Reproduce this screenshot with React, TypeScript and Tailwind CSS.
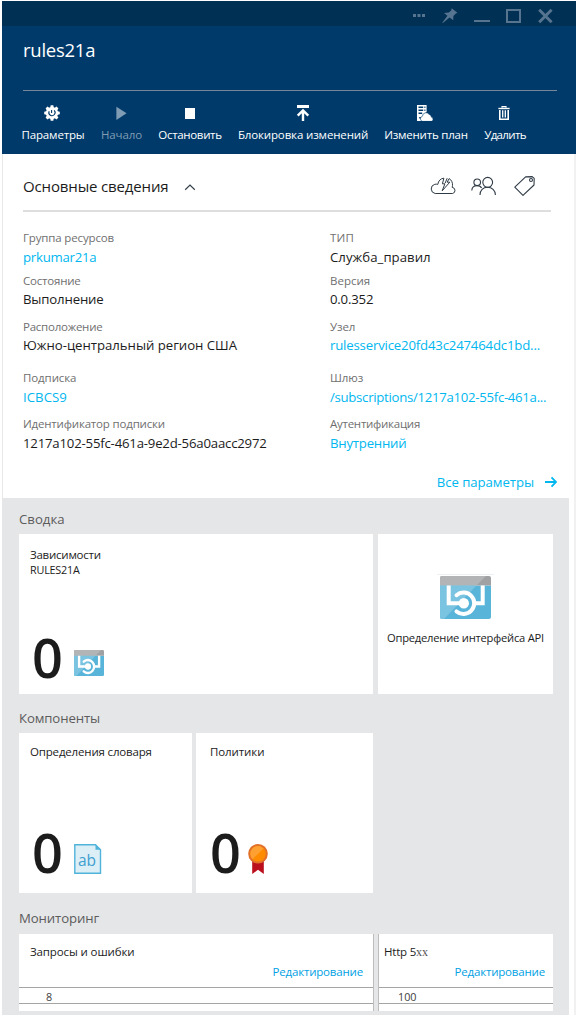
import type { ReactNode } from "react";

const label = "text-[11.5px] leading-[16px] text-[#6f6f6f]";
const link = "text-[#00b7ef]";
const dark = "text-[#1c1c1c]";

function Dots() {
  return (
    <svg width="12" height="16" viewBox="0 0 12 16" fill="#56748f">
      <rect x="0" y="6" width="3" height="3" />
      <rect x="4.5" y="6" width="3" height="3" />
      <rect x="9" y="6" width="3" height="3" />
    </svg>
  );
}

function Pin() {
  return (
    <svg width="16" height="16" viewBox="0 0 16 16" fill="#56748f">
      <path d="M9.7 0.2 L15.4 4.8 L13.6 5.8 L11.4 8 L11.2 12.2 L7.6 9.5 L0.8 15 L0.4 14.5 L5.4 7.8 L2 5 L6.8 4.6 L9.2 2.6 Z" />
    </svg>
  );
}

function Minimize() {
  return (
    <svg width="16" height="16" viewBox="0 0 16 16">
      <rect x="0" y="12" width="16" height="2" fill="#56748f" />
    </svg>
  );
}

function Maximize() {
  return (
    <svg width="15" height="16" viewBox="0 0 15 16">
      <rect x="1" y="2" width="13" height="12" fill="none" stroke="#56748f" strokeWidth="2" />
    </svg>
  );
}

function Close() {
  return (
    <svg width="15" height="16" viewBox="0 0 15 16">
      <path d="M1.2 1.8 L13.6 14.2 M13.6 1.8 L1.2 14.2" stroke="#56748f" strokeWidth="3" />
    </svg>
  );
}

function Gear() {
  return (
    <svg className="mr-0.5" width="16" height="16" viewBox="0 0 16 16">
      <g fill="#fff">
        <circle cx="8" cy="8" r="6.1" />
        <path d="M6.7 0.2h2.6l.6 3h-3.8zM6.7 15.8h2.6l.6-3h-3.8zM.2 6.7v2.6l3 .6V6.1zM15.8 6.7v2.6l-3 .6V6.1z" />
        <path d="M1.6 3.4 3.4 1.6 6 3.2 3.2 6zM14.4 3.4 12.6 1.6 10 3.2 12.8 6zM1.6 12.6l1.8 1.8L6 12.8 3.2 10zM14.4 12.6l-1.8 1.8-2.6-1.6 2.8-2.8z" />
      </g>
      <path d="M5.2 6.2a3.1 3.1 0 1 0 5 -.8M7.600 5v3" fill="none" stroke="#003a6a" strokeWidth="1.1" />
    </svg>
  );
}

function Play() {
  return (
    <svg className="mr-px" width="16" height="16" viewBox="0 0 16 16">
      <path d="M3.4 1.8 L13.6 8.3 L3.4 15 Z" fill="#7f9cb4" />
    </svg>
  );
}

function Stop() {
  return (
    <svg width="16" height="16" viewBox="0 0 16 16">
      <rect x="3" y="3" width="10" height="11" fill="#fff" />
    </svg>
  );
}

function Lock() {
  return (
    <svg width="16" height="16" viewBox="0 0 16 16">
      <rect x="2" y="0" width="12" height="3" fill="#fff" />
      <path d="M8 16V6.2M2.7 10.6 8 5.4l5.3 5.2" fill="none" stroke="#fff" strokeWidth="2.4" />
    </svg>
  );
}

function Plan() {
  return (
    <svg className="mr-0.5" width="16" height="16" viewBox="0 0 16 16">
      <path d="M0 0h9.600v7L6 10v6H0z" fill="#fff" />
      <path d="M1.500 2.200h4.700M7.400 2.200h1M1.500 5.200h4.700M7.400 5.200h1M1.500 8.300h3.700M2.200 12.800h1.800" stroke="#003a6a" strokeWidth="1.4" />
      <path
        d="M5.6 16.4a2.6 2.6 0 0 1-.2-5.1 3.7 3.7 0 0 1 6.8-1.9 2.6 2.6 0 0 1 2.1 2.700 2.2 2.2 0 0 1 0 4.3z"
        fill="#fff"
        stroke="#003a6a"
        strokeWidth=".6"
      />
    </svg>
  );
}

function Trash() {
  return (
    <svg className="mr-0.5" width="16" height="16" viewBox="0 0 16 16" fill="none" stroke="#fff">
      <path d="M2.4 3.5h11.2" strokeWidth="1.4" />
      <path d="M6 2.8V1.6h4v1.2" strokeWidth="1.1" />
      <path d="M3.8 5v9.3h8.4V5" strokeWidth="1.6" />
      <path d="M6.7 5.2v7.4M9.3 5.2v7.4" strokeWidth="1.3" />
    </svg>
  );
}

function CloudBolt() {
  return (
    <svg width="26" height="18" viewBox="0 0 26 18" fill="none" stroke="#2f3b46" strokeWidth="1" strokeLinejoin="round">
      <path d="M12 16.500H5.200a4.700 4.700 0 0 1-.4-9.200 5.500 5.500 0 0 1 3 .1C8.200 4 10.600 1.400 13.900 1.200L12.400 6.800h2.500l-2.700 7 7.600-8.600h-2.600l1.900-3.600c2.400 1.300 3.600 3.800 3.400 6.900l-.3 1.900a3.100 3.100 0 0 1 .4 6.100H12" />
      <path d="M17.200 1.200 15.200 6" />
    </svg>
  );
}

function People() {
  return (
    <svg width="26" height="20" viewBox="0 0 26 20" fill="none" stroke="#2f3b46" strokeWidth="1.1">
      <circle cx="16.7" cy="6.3" r="4.9" />
      <path d="M9 19c0-4.800 3.100-7.700 7.500-7.700s7.900 2.900 7.900 7.700" />
      <circle cx="6.200" cy="6.300" r="3.300" />
      <path d="M.8 14.600c0-3.300 2-5 5.400-5 2 0 3.600.8 4.400 2.400" />
    </svg>
  );
}

function Tag() {
  return (
    <svg width="22" height="20" viewBox="0 0 22 20" fill="none" stroke="#2f3b46" strokeWidth="1.1" strokeLinejoin="round">
      <path d="M.8 11.200 11.600.900 18.200.600 20.200 2.400 20 9 9 19.400Z" />
      <circle cx="17" cy="4" r="1.500" />
    </svg>
  );
}

function ApiIcon({ className }: { className: string }) {
  return (
    <svg className={className} viewBox="0 0 51 43" preserveAspectRatio="none">
      <path d="M0 9.500h51V41a2 2 0 0 1-2 2H2a2 2 0 0 1-2-2z" fill="#59b4d9" />
      <path d="M0 9.500V2a2 2 0 0 1 2-2h47a2 2 0 0 1 2 2v7.500z" fill="#a0a1a2" />
      <path d="M0 9.500V2a2 2 0 0 1 2-2h44L36.500 9.500z" fill="#b3b4b5" />
      <path d="M0 9.500h36.500L4 43H2a2 2 0 0 1-2-2z" fill="#7ac3e1" />
      <g fill="none" stroke="#fff" strokeWidth="4">
        <path d="M8.700 9.500V27.300H21" />
        <path d="M42.700 9.500V27.300H35" />
        <path d="M16.500 19.200a10.700 10.700 0 1 1 0 16.200" strokeLinecap="round" />
      </g>
      <circle cx="23.800" cy="27.300" r="5.200" fill="#fff" />
    </svg>
  );
}

function DictionaryIcon() {
  return (
    <svg width="28" height="30" viewBox="0 0 28 30">
      <path d="M.8.800H21.500L26.500 5.700V29.300H.8Z" fill="#dceef6" stroke="#4fb3da" strokeWidth="1.400" />
      <path d="M21.500.500V5.700H27z" fill="#4fb3da" />
      <text x="4" y="22" fill="#3f9fd0" className="font-['Open_Sans'] text-[15.5px] tracking-[-0.1px]">
        ab
      </text>
    </svg>
  );
}

function MedalIcon() {
  return (
    <svg width="20" height="30" viewBox="0 0 20 30">
      <path d="M4.200 17h11.600V30L10 25.800 4.200 30z" fill="#bb0f1d" />
      <circle cx="10" cy="9.800" r="9.800" fill="#e0702a" />
      <circle cx="10" cy="9.800" r="7.700" fill="#ff8c00" />
      <path d="M4.500 15.200A7.700 7.700 0 0 1 15.500 4.400z" fill="#ffa032" />
    </svg>
  );
}

function Command({ icon, text, className }: { icon: ReactNode; text: string; className: string }) {
  return (
    <button className={`flex flex-col items-center whitespace-nowrap text-[11.5px] leading-[16px] ${className}`}>
      {icon}
      <span className="mt-[6px]">{text}</span>
    </button>
  );
}

function Field({ name, nameClass = "", value, valueClass, tight = false }: { name: string; nameClass?: string; value: string; valueClass: string; tight?: boolean }) {
  return (
    <div className="whitespace-nowrap">
      <div className={`${label} ${nameClass}`}>{name}</div>
      <div className={`text-[13.2px] ${tight ? "leading-[20px]" : "leading-[22px]"} ${valueClass}`}>{value}</div>
    </div>
  );
}

function Section({ title, className, children }: { title: string; className: string; children: ReactNode }) {
  return (
    <section className="pl-[17px]">
      <h3 className={`text-[13.2px] leading-[20px] text-[#5c5c5c] ${className}`}>{title}</h3>
      <div className="flex">{children}</div>
    </section>
  );
}

function ChartCard({ title, tick, className, titlePad, linkPad, tickPad }: { title: ReactNode; tick: string; className: string; titlePad: string; linkPad: string; tickPad: string }) {
  return (
    <div className={`h-[77px] bg-white ${className}`}>
      <div className={`pt-[10px] text-[11.5px] leading-[16px] ${dark} ${titlePad}`}>{title}</div>
      <div className={`mt-[4px] text-right text-[11.5px] leading-[16px] tracking-[-0.18px] text-[#00a1e4] ${linkPad}`}>Редактирование</div>
      <div className={`mt-[7px] h-[17px] border-y border-[#a5a5a5] text-[10.8px] leading-[17px] text-[#404040] ${tickPad}`}>{tick}</div>
    </div>
  );
}

export default function App() {
  return (
    <div className="h-[1016px] w-[576px] overflow-hidden bg-white pl-[2px] pt-px font-['Open_Sans','Noto_Sans',sans-serif]">
      <header className="h-[153px] bg-[#003a6a] text-white">
        <div className="flex h-[25px] items-start justify-end bg-[#003054] pr-[23px] pt-[7px]">
          <Dots />
          <span className="w-[17px]" />
          <Pin />
          <span className="w-[16px]" />
          <Minimize />
          <span className="w-[16px]" />
          <Maximize />
          <span className="w-[17px]" />
          <Close />
        </div>
        <div className="ml-[21px] mr-[19px] h-[65px] border-b border-[#77889b] pt-[12px] text-[18.5px] leading-[24px] tracking-[-0.25px]">
          rules21a
        </div>
        <div className="flex gap-4 pl-[20px] pt-[14px]">
          <Command icon={<Gear />} text="Параметры" className="w-[62px] tracking-[-0.14px]" />
          <Command icon={<Play />} text="Начало" className="ml-px w-[41px] tracking-[-0.1px] text-[#7f9cb4]" />
          <Command icon={<Stop />} text="Остановить" className="w-[64px] tracking-[-0.32px]" />
          <Command icon={<Lock />} text="Блокировка изменений" className="w-[130px] tracking-[-0.14px]" />
          <Command icon={<Plan />} text="Изменить план" className="w-[84px] tracking-[-0.2px]" />
          <Command icon={<Trash />} text="Удалить" className="w-[42px] tracking-[-0.65px]" />
        </div>
      </header>

      <div className="flex h-[861px] border-r-2 border-[#f1f1f1]">
        <div className="w-[567px]">
          <div className="h-[344px] w-[572px] border-l border-[#e8e8e8] pl-[20px]">
            <div className="flex h-[58px] w-[528px] border-b-2 border-[#dedede] pt-[22px]">
              <h2 className={`-mt-px text-[15px] leading-[22px] tracking-[-0.14px] ${dark}`}>Основные сведения</h2>
              <svg className="ml-[15px] mt-[7px]" width="12" height="8" viewBox="0 0 12 8" fill="none" stroke="#333f4a" strokeWidth="1.2">
                <path d="M1.200 6.700 6 2 10.800 6.700" />
              </svg>
              <div className="ml-auto flex pr-[15px]">
                <div className="mr-[15px] mt-px">
                  <CloudBolt />
                </div>
                <div className="mr-[17px]">
                  <People />
                </div>
                <Tag />
              </div>
            </div>

            <div className="mt-[18px] grid h-[232px] grid-cols-[307px_1fr] grid-rows-[43px_46px_51px_46px_46px]">
              <Field name="Группа ресурсов" nameClass="tracking-[-0.15px]" value="prkumar21a" valueClass={`${link} tracking-[-0.25px]`} />
              <Field name="ТИП" nameClass="tracking-[0.2px]" value="Служба_правил" valueClass={`${dark} tracking-[0.04px]`} />
              <Field tight name="Состояние" nameClass="tracking-[-0.2px]" value="Выполнение" valueClass={`${dark} tracking-[-0.16px]`} />
              <Field tight name="Версия" value="0.0.352" valueClass={`${dark} tracking-[-0.2px]`} />
              <Field tight name="Расположение" nameClass="tracking-[-0.24px]" value="Южно-центральный регион США" valueClass={`${dark} tracking-[-0.03px]`} />
              <Field tight name="Узел" nameClass="tracking-[-0.1px]" value="rulesservice20fd43c247464dc1bd..." valueClass={`${link} tracking-[-0.18px]`} />
              <Field name="Подписка" nameClass="tracking-[-0.1px]" value="ICBCS9" valueClass={`${link} tracking-[0.05px]`} />
              <Field name="Шлюз" nameClass="tracking-[-0.1px]" value="/subscriptions/1217a102-55fc-461a..." valueClass={`${link} tracking-[-0.29px]`} />
              <Field name="Идентификатор подписки" nameClass="tracking-[-0.18px]" value="1217a102-55fc-461a-9e2d-56a0aacc2972" valueClass={`${dark} tracking-[-0.2px]`} />
              <Field name="Аутентификация" nameClass="tracking-[-0.26px]" value="Внутренний" valueClass={`${link} tracking-[-0.22px]`} />
            </div>

            <div className={`flex w-[534px] items-center justify-end pt-[10px] text-[13.2px] leading-[20px] tracking-[-0.07px] ${link}`}>
              Все параметры
              <svg className="ml-[11px]" width="12" height="12" viewBox="0 0 12 12" fill="none" stroke="#00b7ef" strokeWidth="1.8">
                <path d="M0 6h11M6.500 1.300 11 6l-4.500 4.700" />
              </svg>
            </div>
          </div>

          <div className="h-[517px] bg-[#e5e6e8] pt-[11px]">
            <Section title="Сводка" className="mb-[5px] tracking-[0.02px]">
              <div className={`mr-[5px] h-[160px] w-[354px] bg-white pl-[11px] pt-[13px] ${dark}`}>
                <div className="text-[11.5px] leading-[16px] tracking-[-0.24px]">Зависимости</div>
                <div className="text-[10.8px] leading-[14px] tracking-[-0.2px]">RULES21A</div>
                <div className="mt-[50px] flex pl-[2px]">
                  <div className="w-[42px] text-[54px] font-semibold leading-[60px]">0</div>
                  <ApiIcon className="mt-[23px] h-[26px] w-[30px]" />
                </div>
              </div>
              <div className={`flex h-[160px] w-[175px] flex-col items-center bg-white pt-[40px] ${dark}`}>
                <div className="border-t border-[#eef1f3] px-[3px] pt-px">
                  <ApiIcon className="h-[43px] w-[51px]" />
                </div>
                <div className="mt-[11px] whitespace-nowrap text-[11.2px] leading-[16px] tracking-[-0.23px]">Определение интерфейса API</div>
              </div>
            </Section>

            <Section title="Компоненты" className="mb-[5px] mt-[14px] tracking-[-0.12px]">
              <div className={`mr-[4px] h-[160px] w-[173px] bg-white pl-[11px] pt-[11px] ${dark}`}>
                <div className="text-[11.5px] leading-[16px] tracking-[-0.17px]">Определения словаря</div>
                <div className="mt-[62px] flex pl-[2px]">
                  <div className="w-[42px] text-[54px] font-semibold leading-[60px]">0</div>
                  <div className="mt-[22px]">
                    <DictionaryIcon />
                  </div>
                </div>
              </div>
              <div className={`h-[160px] w-[177px] bg-white pl-[14px] pt-[11px] ${dark}`}>
                <div className="text-[11.5px] leading-[16px] tracking-[-0.1px]">Политики</div>
                <div className="mt-[62px] flex">
                  <div className="w-[38px] text-[54px] font-semibold leading-[60px]">0</div>
                  <div className="mt-[22px]">
                    <MedalIcon />
                  </div>
                </div>
              </div>
            </Section>

            <Section title="Мониторинг" className="mb-[6px] mt-[15px] tracking-[-0.1px]">
              <ChartCard
                title="Запросы и ошибки"
                tick="8"
                className="mr-[4px] w-[355px] border-r border-[#bdbdbd] tracking-[-0.12px]"
                titlePad="pl-[11px]"
                linkPad="pr-[10px]"
                tickPad="pl-[27px]"
              />
              <ChartCard
                title={
                  <>
                    <span className="tracking-[-0.2px]">Http 5</span>
                    <span className="font-['Liberation_Serif'] text-[12px] text-[#555]">xx</span>
                  </>
                }
                tick="100"
                className="w-[175px] border-l border-[#bdbdbd]"
                titlePad="pl-[5px]"
                linkPad="pr-[8px]"
                tickPad="pl-[19px]"
              />
            </Section>
          </div>
        </div>
      </div>
    </div>
  );
}
